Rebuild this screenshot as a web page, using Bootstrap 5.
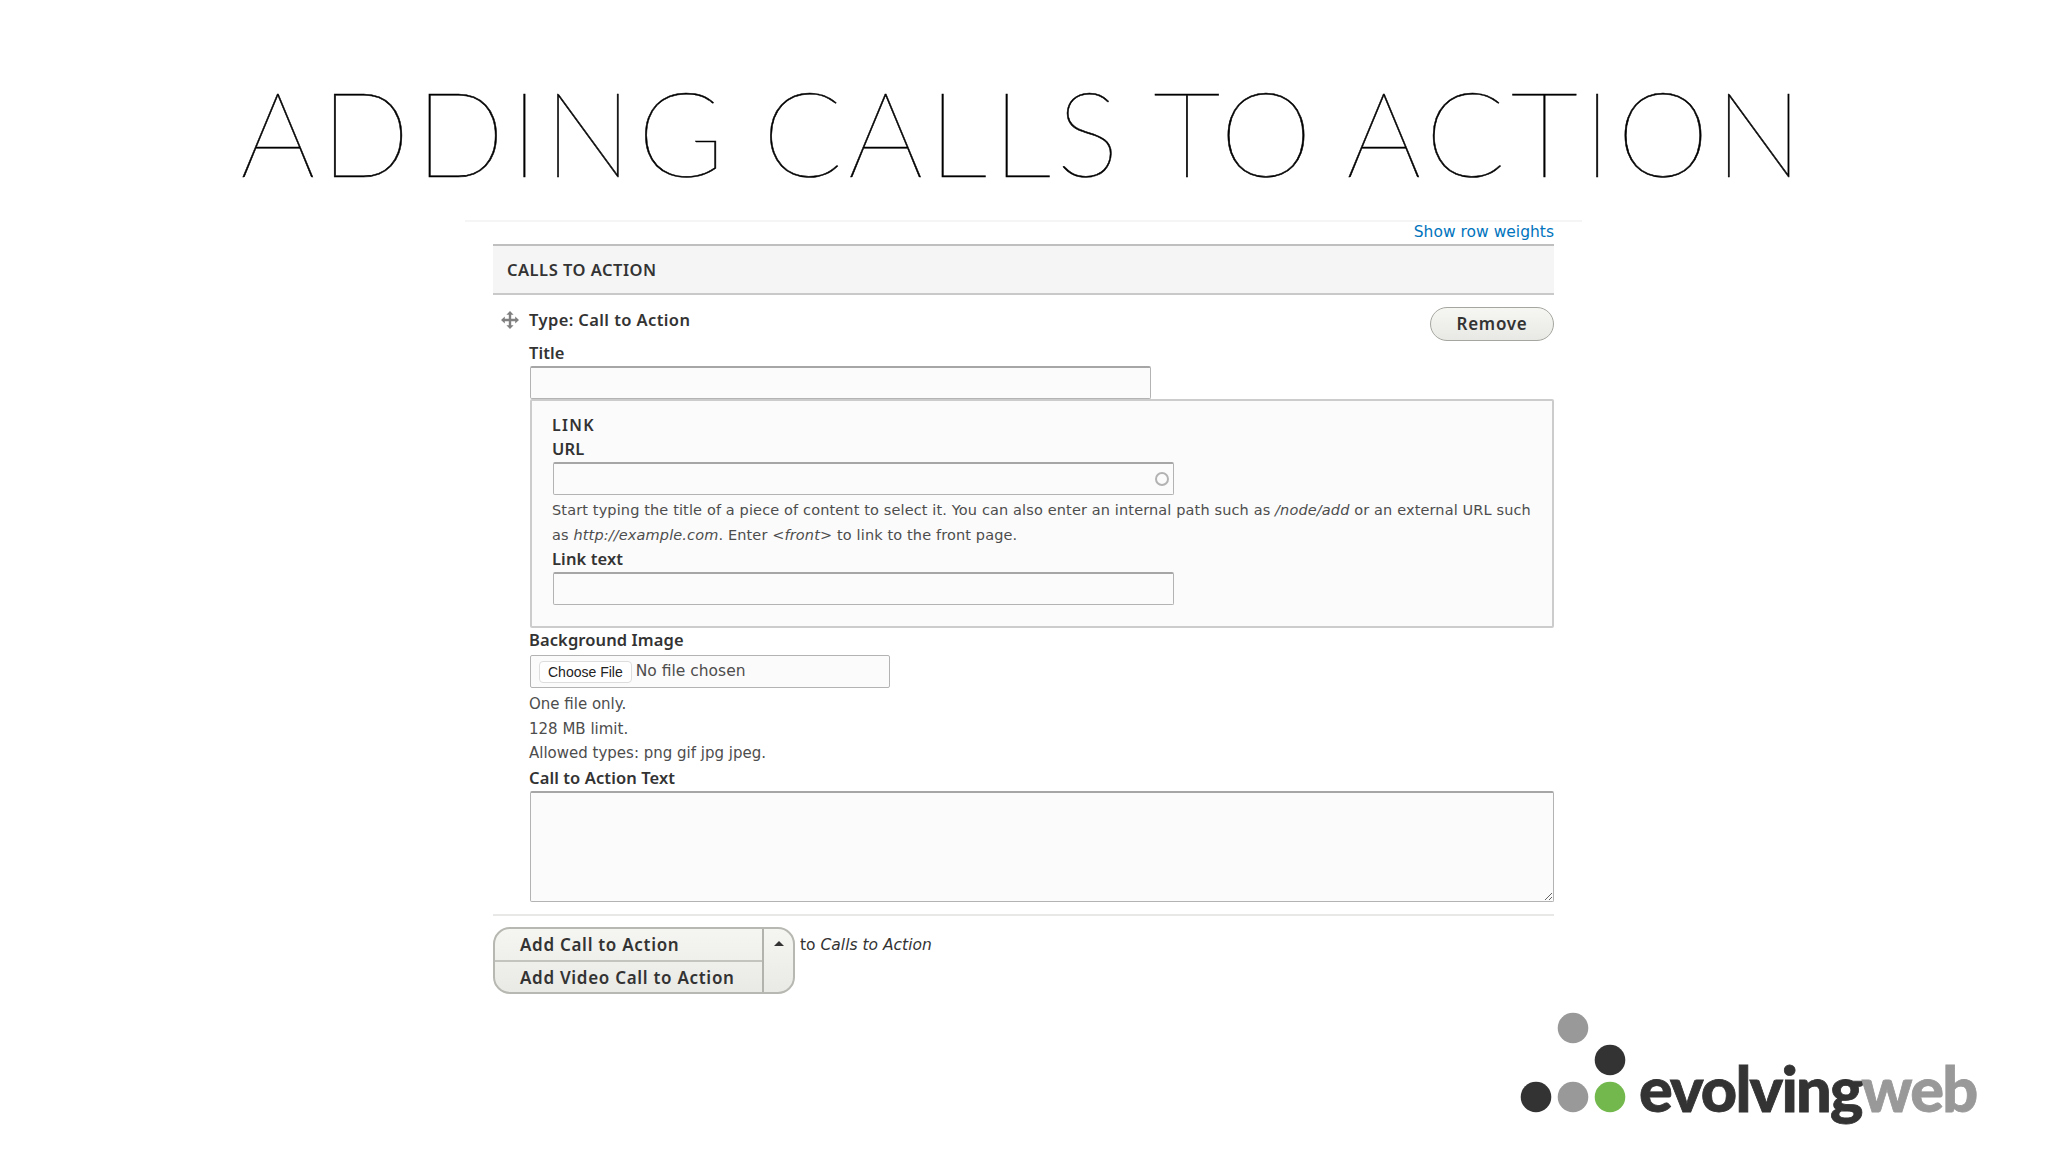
<!DOCTYPE html>
<html lang="en">
<head>
    <meta charset="UTF-8">
    <meta name="viewport" content="width=device-width, initial-scale=1.0">
    <link href="https://cdn.jsdelivr.net/npm/bootstrap@5.3.0/dist/css/bootstrap.min.css" rel="stylesheet">
    <title>Adding Calls to Action</title>
    <style>
        body { background: #fff; color: #333; font-family: "DejaVu Sans", sans-serif; font-size: 14.5px; line-height: 24.5px; }
        .slide { width: 2048px; height: 1152px; overflow: hidden; }
        .slide-title { font-family: Lato, sans-serif; font-weight: 100; font-size: 118px; line-height: 118px; letter-spacing: 5.1px; word-spacing: -6px; -webkit-text-stroke: .5px #000; color: #000; margin: 73px 0 0; height: 147px; text-align: center; white-space: nowrap; }
        .form-area { width: 1117px; margin-left: 465px; border-top: 2px solid #f5f5f5; padding: 0 28px; }
        .weights-link { height: 22px; line-height: 20px; text-align: right; color: #0074bd; text-decoration: none; display: block; font-size: 15.5px; }
        .panel-head { height: 51px; background: #f5f5f5; border-top: 2px solid #bfbfbf; border-bottom: 2px solid #c9c9c9; padding-left: 14px; font-family: "Noto Sans", sans-serif; font-weight: 600; font-size: 16.5px; letter-spacing: .5px; line-height: 47px; }
        .item-body { padding-left: 37px; }
        .type-row { height: 46px; position: relative; }
        .type-name { padding-left: 36px; font-family: "Noto Sans", sans-serif; font-weight: 600; font-size: 16.5px; letter-spacing: .4px; line-height: 50px; }
        .grip { position: absolute; left: 8px; top: 16px; }
        .remove-btn { width: 124px; height: 34px; margin-top: 12px; padding: 0; border: 1px solid #a6a6a0; border-radius: 17px; background: linear-gradient(#f6f6f3, #e8e8e4); color: #333; font-family: "Noto Sans", sans-serif; font-weight: 600; font-size: 17px; letter-spacing: .7px; }
        .fld-label { display: block; font-family: "Noto Sans", sans-serif; font-weight: 600; font-size: 16.5px; letter-spacing: .1px; line-height: 23px; padding-bottom: 2px; margin: 0 0 0 -1px; }
        .fld-input { border: 1px solid #b3b3b3; border-top: 2px solid #a6a6a6; border-radius: 2px; background: #fbfbfb; height: 33px; padding: 0; box-shadow: none; }
        .w-title { width: 621px; }
        .link-box { background: #fbfbfb; border: 2px solid #ccc; border-radius: 2px; height: 229px; padding: 12px 21px 0; }
        .link-legend { font-family: "Noto Sans", sans-serif; font-weight: 600; font-size: 16px; letter-spacing: 1.3px; line-height: 24px; margin-left: -1px; }
        .url-wrap { position: relative; width: 621px; }
        .spinner-ring { position: absolute; right: 5px; top: 10px; width: 14px; height: 14px; border: 2px solid #b3b3b3; border-radius: 50%; }
        .help-text { color: #4d4d4d; font-size: 14.5px; letter-spacing: .13px; line-height: 24.5px; margin: 3px 0 0 -1px; white-space: nowrap; }
        .file-box { width: 360px; height: 33px; border: 1px solid #b3b3b3; border-radius: 2px; background: #fbfbfb; margin: 2px 0 4px; }
        .file-btn { font-family: "Liberation Sans", sans-serif; font-size: 14px; line-height: 20px; height: 22px; padding: 0 8px; margin-left: 8px; border: 1px solid #ddd; border-radius: 4px; background: #fff; color: #222; }
        .file-status { margin-left: 4px; font-size: 15.5px; color: #4d4d4d; }
        .file-note { color: #4d4d4d; font-size: 15px; line-height: 24.5px; margin-left: -1px; }
        .cta-area { width: 1024px; height: 111px; border: 1px solid #b3b3b3; border-top: 2px solid #a6a6a6; border-radius: 2px; background: #fbfbfb; padding: 0; box-shadow: none; display: block; }
        .item-end { border-top: 2px solid #e8e8e6; margin-top: 12px; height: 13px; }
        .drop-wrap { width: 302px; height: 67px; border: 2px solid #b8b8b2; border-radius: 17px; overflow: hidden; background: linear-gradient(#f5f5f2, #e9e9e5); }
        .drop-list { width: 269px; border-right: 2px solid #b3b3ad; }
        .drop-item { height: 31px; line-height: 31px; padding: 0 0 0 25px; font-family: "Noto Sans", sans-serif; font-weight: 600; font-size: 17px; letter-spacing: .7px; border: 0; background: transparent; color: #333; text-align: left; display: block; width: 100%; }
        .drop-item + .drop-item { border-top: 2px solid #c4c4be; height: 34px; }
        .drop-caret { flex: 1; padding-top: 12px; text-align: center; }
        .caret-up { display: inline-block; border: 5px solid transparent; border-top: 0; border-bottom-color: #333; vertical-align: top; }
        .to-label { margin-left: 5px; line-height: 36px; font-size: 15.5px; }
        .logo-row { padding: 13px 68px 0 0; }
    </style>
</head>
<body>

<div class="slide d-flex flex-column">
    <h1 class="slide-title">ADDING CALLS TO ACTION</h1>

    <div class="form-area">
        <a href="#" class="weights-link">Show row weights</a>
        <div class="panel-head">CALLS TO ACTION</div>

        <div class="type-row d-flex justify-content-between">
            <svg class="grip" width="18" height="18" viewBox="0 0 18 18" fill="#808080">
                <path d="M9 0l3.600 3.800h-2.400v4h4V5.400L18 9l-3.800 3.600v-2.400h-4v4h2.400L9 18l-3.600-3.800h2.400v-4h-4v2.400L0 9l3.800-3.600v2.400h4v-4H5.400z"/>
            </svg>
            <div class="type-name">Type: Call to Action</div>
            <button type="button" class="remove-btn">Remove</button>
        </div>

        <div class="item-body">
            <label class="fld-label">Title</label>
            <input type="text" class="form-control fld-input w-title">

            <div class="link-box">
                <div class="link-legend">LINK</div>
                <label class="fld-label">URL</label>
                <div class="url-wrap">
                    <input type="text" class="form-control fld-input">
                    <span class="spinner-ring"></span>
                </div>
                <p class="help-text">Start typing the title of a piece of content to select it. You can also enter an internal path such as <em>/node/add</em> or an external URL such<br>as <em>http://example.com</em>. Enter <em>&lt;front&gt;</em> to link to the front page.</p>
                <label class="fld-label">Link text</label>
                <input type="text" class="form-control fld-input w-title">
            </div>

            <label class="fld-label">Background Image</label>
            <div class="file-box d-flex align-items-center">
                <button type="button" class="file-btn">Choose File</button>
                <span class="file-status">No file chosen</span>
            </div>
            <div class="file-note">One file only.</div>
            <div class="file-note">128 MB limit.</div>
            <div class="file-note">Allowed types: png gif jpg jpeg.</div>

            <label class="fld-label">Call to Action Text</label>
            <textarea class="form-control cta-area"></textarea>
        </div>

        <div class="item-end"></div>

        <div class="d-flex">
            <div class="drop-wrap d-flex">
                <div class="drop-list">
                    <button type="button" class="drop-item">Add Call to Action</button>
                    <button type="button" class="drop-item">Add Video Call to Action</button>
                </div>
                <div class="drop-caret"><span class="caret-up"></span></div>
            </div>
            <div class="to-label">to <em>Calls to Action</em></div>
        </div>
    </div>

    <div class="logo-row d-flex justify-content-end">
        <svg width="460" height="130" viewBox="0 0 460 130">
            <circle cx="53" cy="21" r="15.300" fill="#999"/>
            <circle cx="90" cy="53" r="15.300" fill="#333"/>
            <circle cx="16" cy="90" r="15.300" fill="#333"/>
            <circle cx="53" cy="90" r="15.300" fill="#999"/>
            <circle cx="90" cy="90" r="15.300" fill="#72b84c"/>
            <text x="119" y="105" font-family="Lato, sans-serif" font-weight="900" font-size="63" letter-spacing="-1.800" stroke-width=".8" fill="#333" stroke="#333">evolving<tspan fill="#999" stroke="#999">web</tspan></text>
        </svg>
    </div>
</div>

<script src="https://cdn.jsdelivr.net/npm/bootstrap@5.3.0/dist/js/bootstrap.bundle.min.js"></script>
</body>
</html>
